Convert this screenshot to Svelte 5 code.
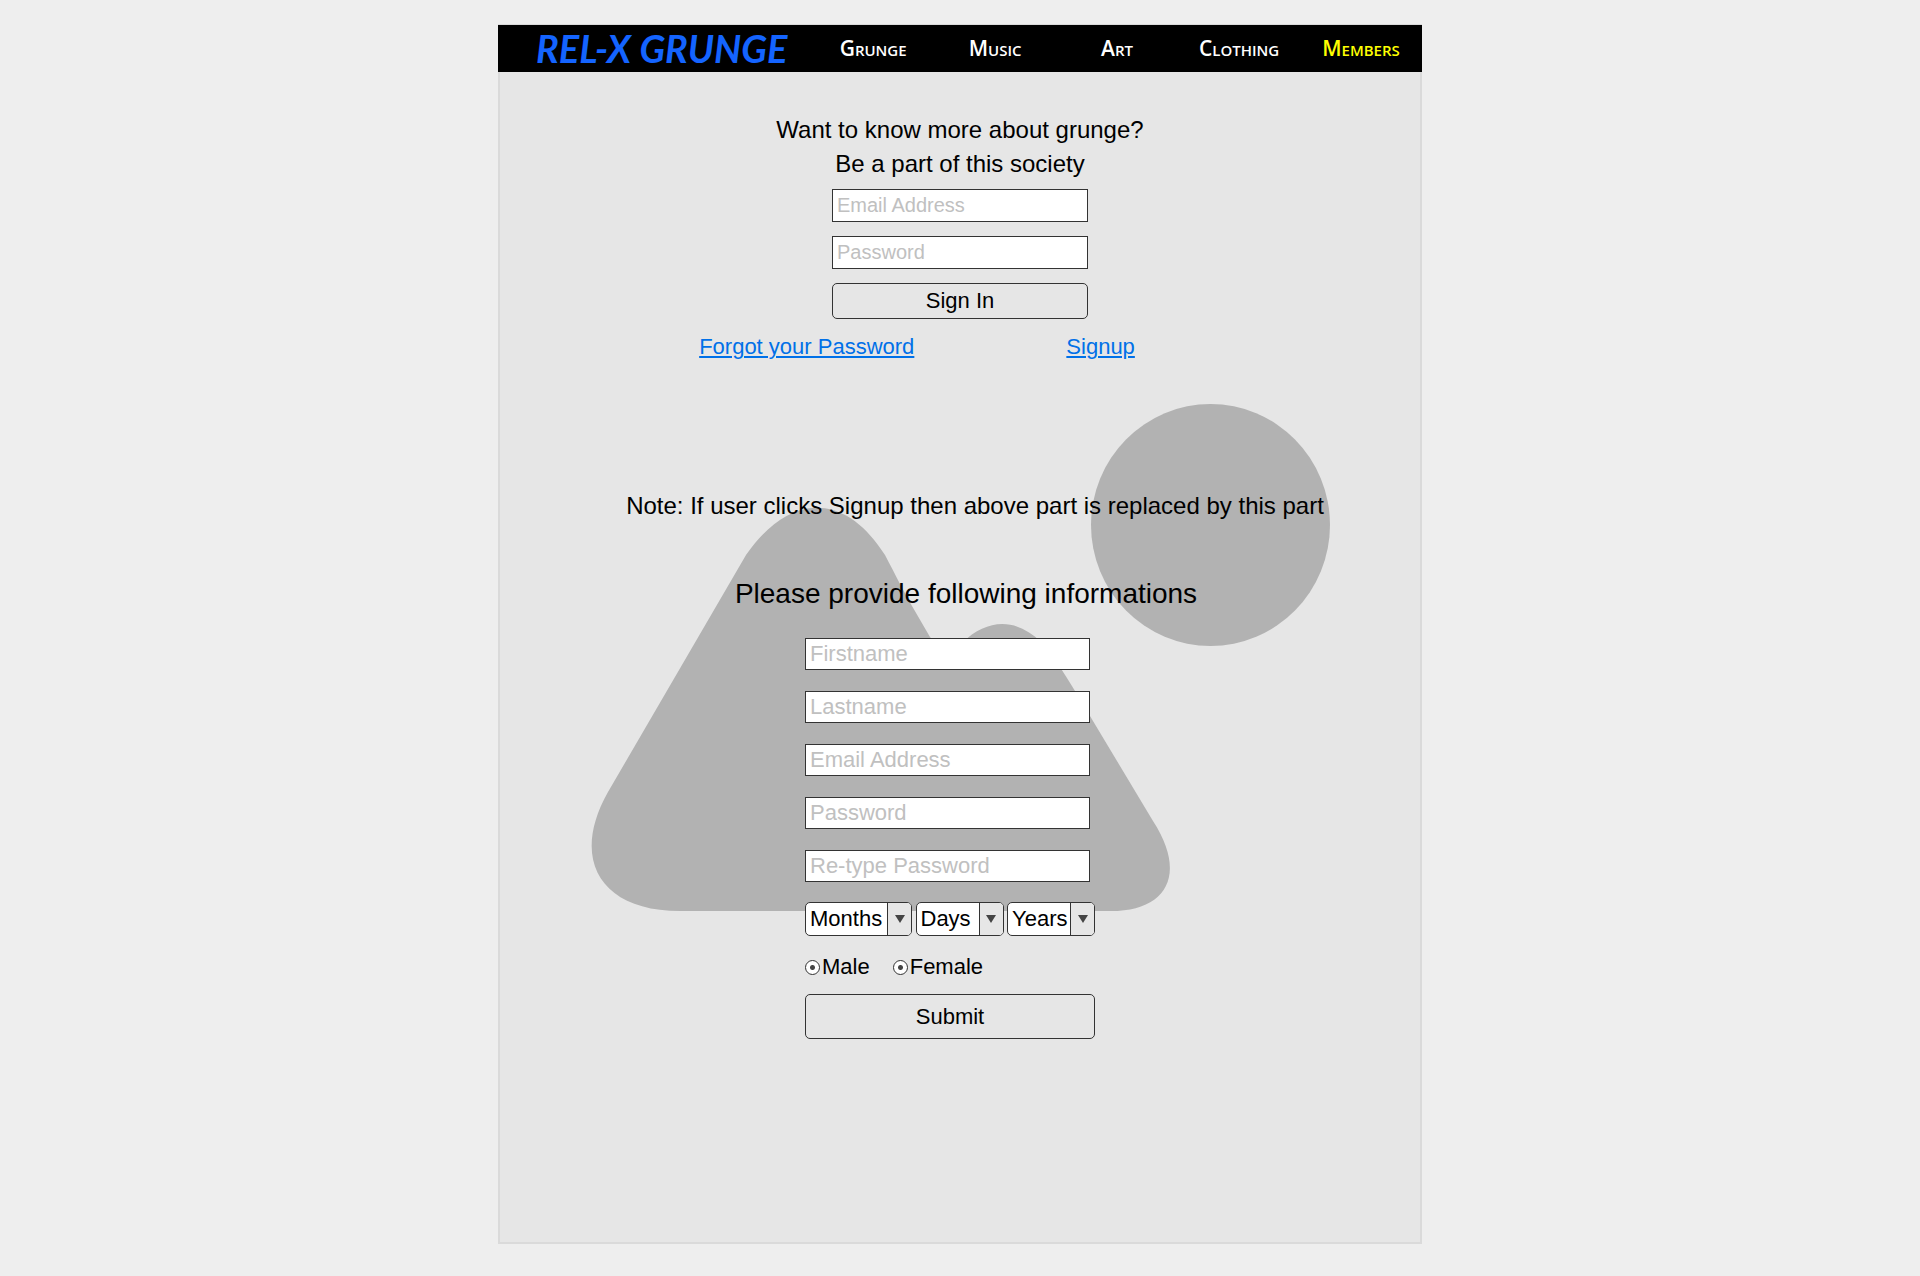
<script>
  const links = [
    { label: 'Grunge' },
    { label: 'Music' },
    { label: 'Art' },
    { label: 'Clothing' },
    { label: 'Members', current: true }
  ];

  const fields = [
    { id: 'firstname', label: 'Firstname', type: 'text' },
    { id: 'lastname', label: 'Lastname', type: 'text' },
    { id: 'email', label: 'Email Address', type: 'email' },
    { id: 'new-password', label: 'Password', type: 'password' },
    { id: 'retype-password', label: 'Re-type Password', type: 'password' }
  ];

  const dates = ['Months', 'Days', 'Years'];
  const genders = ['Male', 'Female'];
</script>

<div class="page">
  <div class="panel">
    <svg class="backdrop" viewBox="0 0 924 1220" aria-hidden="true">
      <ellipse cx="712.5" cy="501" rx="119.5" ry="121" />
      <path d="M248 531C292 468 347 468 387 531C398 552 406 568 414 582L432 613Q449 636 464 619C490 594 518 594 543 618C562 640 577 667 592 692L655 797C690 851 668 887 613 887H182C102 887 72 835 110 768Z" />
    </svg>

    <header>
      <a class="logo" href="#home">REL-X GRUNGE</a>
      <nav>
        {#each links as link}
          <a href="#{link.label.toLowerCase()}" class:current={link.current}>{link.label}</a>
        {/each}
      </nav>
    </header>

    <main>
      <form class="signin">
        <p>Want to know more about grunge?<br />Be a part of this society</p>
        <input type="email" placeholder="Email Address" aria-label="Email Address" />
        <input type="password" placeholder="Password" aria-label="Password" />
        <button type="button">Sign In</button>
      </form>
      <div class="help">
        <a href="#forgot">Forgot your Password</a>
        <a href="#signup">Signup</a>
      </div>

      <p class="note">Note: If user clicks Signup then above part is replaced by this part</p>
      <h1>Please provide following informations</h1>

      <form class="signup">
        <div class="fields">
          {#each fields as field}
            <input id={field.id} type={field.type} placeholder={field.label} aria-label={field.label} />
          {/each}
        </div>
        <div class="dates">
          {#each dates as date}
            <div class="select">
              <select aria-label={date}><option>{date}</option></select>
              <span class="arrow"><svg viewBox="0 0 10 8"><path d="M0 0H10L5 8Z" /></svg></span>
            </div>
          {/each}
        </div>
        <div class="genders">
          {#each genders as gender}
            <label><input type="radio" name={gender} checked />{gender}</label>
          {/each}
        </div>
        <button type="button">Submit</button>
      </form>
    </main>
  </div>
</div>

<style>
  :global(body) {
    margin: 0;
    background: #eee;
  }

  .page,
  .page * {
    box-sizing: border-box;
  }

  .page {
    min-height: 100vh;
    padding: 24px 16px 32px;
    font-family: 'Liberation Sans', Arial, sans-serif;
    font-size: 22px;
    line-height: 28px;
    color: #000;
  }

  .panel {
    position: relative;
    max-width: 924px;
    margin: 0 auto;
    padding-top: 1px;
    background: #e6e6e6;
    box-shadow: inset 0 0 0 2px #dadada;
  }

  .backdrop {
    position: absolute;
    top: 0;
    left: 0;
    width: 100%;
    fill: #b2b2b2;
  }

  header {
    position: relative;
    display: flex;
    background: #000;
  }

  .logo {
    flex: 1;
    padding-left: 38px;
    font: italic bold 38px/47px Lato, sans-serif;
    color: #1464ff;
    white-space: nowrap;
    text-decoration: none;
  }

  nav {
    display: grid;
    grid-template-columns: repeat(5, minmax(0, 1fr));
    width: 66%;
  }

  nav a {
    font: small-caps 600 21px/47px 'Open Sans', sans-serif;
    color: #fff;
    text-align: center;
    text-decoration: none;
  }

  nav .current {
    color: #ff0;
  }

  main {
    position: relative;
    display: flex;
    flex-direction: column;
    align-items: center;
    padding: 41px 0 205px;
  }

  p,
  h1 {
    margin: 0;
    font-weight: 400;
    font-size: 24px;
    line-height: 34px;
    text-align: center;
    white-space: nowrap;
  }

  .signin {
    display: flex;
    flex-direction: column;
    align-items: center;
    gap: 14px;
  }

  .signin p {
    margin-bottom: -6px;
  }

  input,
  button,
  select {
    margin: 0;
    font-family: inherit;
    font-size: 22px;
    color: #000;
    border: 1px solid #333;
  }

  input {
    height: 32px;
    padding: 0 4px;
    background: #fff;
    border-radius: 0;
  }

  input::placeholder {
    color: #c0c0c0;
    opacity: 1;
  }

  .signin input {
    width: 256px;
    height: 33px;
    font-size: 20px;
  }

  button {
    padding: 0;
    background: #e6e6e6;
    border-radius: 5px;
  }

  .signin button {
    width: 256px;
    height: 36px;
  }

  .help {
    display: flex;
    gap: 152px;
    padding: 14px 86px 0 0;
  }

  .help a {
    color: #0070e8;
    text-decoration-thickness: 2px;
    text-underline-offset: 2px;
  }

  .note {
    margin-top: 128px;
    padding-left: 30px;
  }

  h1 {
    margin-top: 54px;
    padding-left: 12px;
    font-size: 28px;
  }

  .signup {
    width: 290px;
    margin: 27px 20px 0 0;
  }

  .fields {
    display: grid;
    grid-template-columns: minmax(0, 1fr);
    gap: 21px;
    padding-right: 5px;
  }

  .dates {
    display: grid;
    grid-template-columns: 107px 88px 88px;
    justify-content: space-between;
    margin-top: 20px;
  }

  .select {
    display: grid;
    grid-template-columns: 1fr 24px;
    height: 34px;
    overflow: hidden;
    background: #fff;
    border: 1px solid #333;
    border-radius: 5px;
  }

  select {
    grid-area: 1 / 1 / 2 / 3;
    padding: 0 0 2px 4px;
    appearance: none;
    background: none;
    border: 0;
  }

  .arrow {
    display: grid;
    grid-area: 1 / 2;
    place-items: center;
    background: #e6e6e6;
    border-left: 1px solid #333;
    pointer-events: none;
  }

  .arrow svg {
    width: 10px;
    height: 8px;
    fill: #444;
  }

  .genders {
    display: flex;
    gap: 23px;
    margin-top: 17px;
  }

  label {
    display: flex;
    align-items: center;
    gap: 2px;
  }

  input[type='radio'] {
    width: 15px;
    height: 15px;
    padding: 0;
    appearance: none;
    background: radial-gradient(circle, #444 0 2px, #fff 3px);
    border-radius: 50%;
  }

  .signup button {
    width: 100%;
    height: 45px;
    margin-top: 13px;
  }
</style>
